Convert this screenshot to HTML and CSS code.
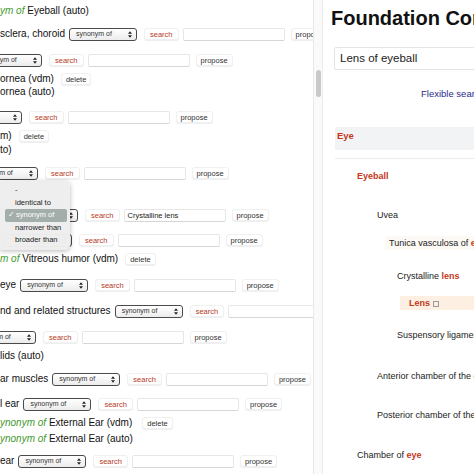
FILE: index.html
```html
<!DOCTYPE html>
<html>
<head>
<meta charset="utf-8">
<link rel="stylesheet" href="styles.css">
</head>
<body>
<div class="page">
  <div class="left">
    <div class="rows">
      <div class="row h23"><div class="line"><span class="lbl"><i class="syn">ym of</i> Eyeball (auto)</span></div></div>
      <div class="row h26"><div class="line"><span class="lbl">sclera, choroid</span><span class="sel"><span class="sel-t">synonym of</span><svg class="arr" viewBox="0 0 6 10"><path d="M3 0L6 4H0Z M3 10L0 6H6Z"/></svg></span><span class="btn srch">search</span><span class="inp"></span><span class="btn prop">propose</span></div></div>
      <div class="row h19"><div class="line"><span class="sel off26"><span class="sel-t">synonym of</span><svg class="arr" viewBox="0 0 6 10"><path d="M3 0L6 4H0Z M3 10L0 6H6Z"/></svg></span><span class="btn srch">search</span><span class="inp"></span><span class="btn prop">propose</span></div></div>
      <div class="row h13"><div class="line"><span class="lbl">ornea (vdm)</span><span class="btn del">delete</span></div></div>
      <div class="row h25"><div class="line"><span class="lbl">ornea (auto)</span></div></div>
      <div class="row h19"><div class="line"><span class="sel off46"><span class="sel-t">synonym of</span><svg class="arr" viewBox="0 0 6 10"><path d="M3 0L6 4H0Z M3 10L0 6H6Z"/></svg></span><span class="btn srch">search</span><span class="inp"></span><span class="btn prop">propose</span></div></div>
      <div class="row h14"><div class="line"><span class="lbl">m)</span><span class="btn del">delete</span></div></div>
      <div class="row h23"><div class="line"><span class="lbl">to)</span></div></div>
      <div class="row h21"><div class="line"><span class="sel off30"><span class="sel-t">synonym of</span><svg class="arr" viewBox="0 0 6 10"><path d="M3 0L6 4H0Z M3 10L0 6H6Z"/></svg></span><span class="btn srch">search</span><span class="inp"></span><span class="btn prop">propose</span></div></div>
      <div class="row h21"><div class="line"></div></div>
      <div class="row h25"><div class="line"><span class="sel ml10"><span class="sel-t">synonym of</span><svg class="arr" viewBox="0 0 6 10"><path d="M3 0L6 4H0Z M3 10L0 6H6Z"/></svg></span><span class="btn srch">search</span><span class="inp">Crystalline lens</span><span class="btn prop">propose</span></div></div>
      <div class="row h19"><div class="line"><span class="sel ml4"><span class="sel-t">synonym of</span><svg class="arr" viewBox="0 0 6 10"><path d="M3 0L6 4H0Z M3 10L0 6H6Z"/></svg></span><span class="btn srch">search</span><span class="inp"></span><span class="btn prop">propose</span></div></div>
      <div class="row h26"><div class="line"><span class="lbl"><i class="syn">m of</i> Vitreous humor (vdm)</span><span class="btn del">delete</span></div></div>
      <div class="row h26"><div class="line"><span class="lbl">eye</span><span class="sel"><span class="sel-t">synonym of</span><svg class="arr" viewBox="0 0 6 10"><path d="M3 0L6 4H0Z M3 10L0 6H6Z"/></svg></span><span class="btn srch">search</span><span class="inp"></span><span class="btn prop">propose</span></div></div>
      <div class="row h26"><div class="line"><span class="lbl">nd and related structures</span><span class="sel"><span class="sel-t">synonym of</span><svg class="arr" viewBox="0 0 6 10"><path d="M3 0L6 4H0Z M3 10L0 6H6Z"/></svg></span><span class="btn srch">search</span><span class="inp"></span><span class="btn prop">propose</span></div></div>
      <div class="row h19"><div class="line"><span class="sel off32"><span class="sel-t">synonym of</span><svg class="arr" viewBox="0 0 6 10"><path d="M3 0L6 4H0Z M3 10L0 6H6Z"/></svg></span><span class="btn srch">search</span><span class="inp"></span><span class="btn prop">propose</span></div></div>
      <div class="row h23"><div class="line"><span class="lbl">lids (auto)</span></div></div>
      <div class="row h25"><div class="line"><span class="lbl">ar muscles</span><span class="sel"><span class="sel-t">synonym of</span><svg class="arr" viewBox="0 0 6 10"><path d="M3 0L6 4H0Z M3 10L0 6H6Z"/></svg></span><span class="btn srch">search</span><span class="inp"></span><span class="btn prop">propose</span></div></div>
      <div class="row h19"><div class="line"><span class="lbl">l ear</span><span class="sel"><span class="sel-t">synonym of</span><svg class="arr" viewBox="0 0 6 10"><path d="M3 0L6 4H0Z M3 10L0 6H6Z"/></svg></span><span class="btn srch">search</span><span class="inp"></span><span class="btn prop">propose</span></div></div>
      <div class="row h16"><div class="line"><span class="lbl"><i class="syn">ynonym of</i> External Ear (vdm)</span><span class="btn del wide">delete</span></div></div>
      <div class="row h22"><div class="line"><span class="lbl"><i class="syn">ynonym of</i> External Ear (auto)</span></div></div>
      <div class="row h13"><div class="line"><span class="lbl">ear</span><span class="sel"><span class="sel-t">synonym of</span><svg class="arr" viewBox="0 0 6 10"><path d="M3 0L6 4H0Z M3 10L0 6H6Z"/></svg></span><span class="btn srch">search</span><span class="inp"></span><span class="btn prop">propose</span></div></div>
    </div>
    <div class="menu">
      <div class="mi">-</div>
      <div class="mi">identical to</div>
      <div class="mi on"><span class="chk">✓</span>synonym of</div>
      <div class="mi">narrower than</div>
      <div class="mi">broader than</div>
    </div>
  </div>
  <div class="scroll"><div class="thumb"></div></div>
  <div class="right">
    <div class="title">Foundation Concepts</div>
    <div class="search">Lens of eyeball</div>
    <div class="flex">Flexible search</div>
    <div class="tree">
      <div class="eyerow"><div class="eyeband"><b class="hit">Eye</b></div></div>
      <div class="trow t39 l1"><div class="tl"><b class="hit">Eyeball</b></div></div>
      <div class="trow t28 l2"><div class="tl">Uvea</div></div>
      <div class="trow t33 l3"><div class="tl"><span class="band faint">Tunica vasculosa of <b class="hit">eye</b></span></div></div>
      <div class="trow t27 l4"><div class="tl">Crystalline <b class="hit">lens</b></div></div>
      <div class="trow t32 l5"><div class="tl"><span class="band warm"><b class="hit">Lens</b><span class="box"></span></span></div></div>
      <div class="trow t41 l4"><div class="tl">Suspensory ligament</div></div>
      <div class="trow t39 l2"><div class="tl">Anterior chamber of the eye</div></div>
      <div class="trow t40 l2"><div class="tl">Posterior chamber of the eye</div></div>
      <div class="trow t20 l1"><div class="tl">Chamber of <b class="hit">eye</b></div></div>
    </div>
  </div>
</div>
</body>
</html>
```
FILE: styles.css
```css
* { box-sizing: border-box; }
html, body { margin: 0; padding: 0; background: #fff; }
body { width: 474px; height: 474px; overflow: hidden; font-family: "Liberation Sans", Arial, sans-serif; color: #111; }
.page { display: flex; height: 474px; }

.left { position: relative; width: 313px; flex: none; overflow: hidden; }
.rows { padding-top: 5px; }
.h13 { height: 13px; } .h14 { height: 14px; } .h16 { height: 16px; } .h19 { height: 19px; }
.h21 { height: 21px; } .h22 { height: 22px; } .h23 { height: 23px; } .h25 { height: 25px; } .h26 { height: 26px; }
.line { height: 12px; display: flex; align-items: center; white-space: nowrap; }
.lbl { font-size: 10px; line-height: 12px; flex: none; }
.syn { color: #3f9a2e; }

.sel { flex: none; width: 68px; height: 13px; margin-left: 4px; border: 1px solid #4a4a4a; border-radius: 3px;
  background: linear-gradient(#ffffff, #ececec); display: flex; align-items: center; justify-content: space-between;
  padding: 0 4px 0 6px; }
.sel-t { font-size: 7px; color: #333; line-height: 10px; }
.arr { width: 4px; height: 7px; fill: #222; }
.off26 { margin-left: -26px; } .off46 { margin-left: -46px; } .off30 { margin-left: -30px; } .off32 { margin-left: -32px; }
.ml10 { margin-left: 10px; } .ml4 { margin-left: 4px; }

.btn { flex: none; height: 12px; padding: 0 5px; font-size: 7.5px; line-height: 11px; color: #333; background: #fff;
  border: 1px solid #f0f0f0; border-radius: 3px; box-shadow: 0 1px 1px rgba(0,0,0,0.07); }
.srch { color: #b53a26; margin-left: 7px; }
.prop { margin-left: 6px; padding: 0 4px; }
.del { margin-left: 7px; padding: 0 4px; }
.del.wide { margin-left: 10px; }
.inp { flex: none; width: 102px; height: 13px; margin-left: 4px; border: 1px solid #e6e6e6; border-bottom-color: #d6d6d6;
  border-radius: 2px; background: #fff; font-size: 7.5px; line-height: 11px; padding-left: 3px; color: #222; }

.menu { position: absolute; left: -2px; top: 181px; width: 72px; padding: 3px 0; background: rgba(238,238,238,0.98);
  border-radius: 5px; box-shadow: 0 1px 5px rgba(0,0,0,0.28); }
.mi { height: 12.5px; font-size: 7.5px; line-height: 12.5px; padding-left: 17px; color: #222; white-space: nowrap; }
.mi.on { background: #a3aeab; color: #fff; margin: 0 3px 0 7px; padding-left: 3px; border-radius: 2px; }
.chk { display: inline-block; width: 8px; }

.scroll { position: relative; width: 10px; flex: none; background: #fafafa; border-left: 1px solid #e9e9e9; border-right: 1px solid #ececec; }
.thumb { position: absolute; left: 2px; top: 70px; width: 5px; height: 27px; border-radius: 3px; background: #c9c9c9; }

.right { flex: 1; min-width: 0; overflow: hidden; padding: 6px 0 0 8px; white-space: nowrap; }
.title { font-size: 20px; line-height: 24px; font-weight: bold; color: #111; }
.search { margin: 17px 0 0 3px; width: 200px; height: 23px; border: 1px solid #e4e4e4; border-radius: 2px;
  font-size: 11.5px; line-height: 21px; padding-left: 5px; color: #222; }
.flex { margin-top: 18px; padding-left: 90px; height: 12px; font-size: 9.5px; line-height: 12px; color: #2b2b8f; }

.tree { margin: 27px 0 0 4px; font-size: 9px; color: #222; }
.hit { color: #c2381c; font-weight: bold; }
.eyerow { height: 32px; padding-bottom: 8px; border-bottom: 1px solid #ececec; }
.eyeband { height: 23px; background: #f2f3f5; padding-left: 2px; line-height: 18px; font-size: 9.5px; }
.trow:nth-child(2) { margin-top: 11px; }
.t20 { height: 20px; } .t27 { height: 27px; } .t28 { height: 28px; } .t32 { height: 32px; } .t33 { height: 33px; }
.t39 { height: 39px; } .t40 { height: 40px; } .t41 { height: 41px; }
.tl { height: 12px; line-height: 12px; }
.l1 { padding-left: 22px; } .l2 { padding-left: 42px; } .l3 { padding-left: 50px; } .l4 { padding-left: 62px; } .l5 { padding-left: 65px; }
.band { display: inline-block; height: 14px; line-height: 14px; width: 200px; margin-top: -1px; vertical-align: top; }
.band.faint { background: #fdf9f5; padding-left: 4px; }
.band.warm { background: #fdf0e2; padding-left: 9px; }
.box { display: inline-block; width: 6px; height: 6px; border: 1px solid #9a9a9a; margin-left: 3px; vertical-align: middle; }
```
